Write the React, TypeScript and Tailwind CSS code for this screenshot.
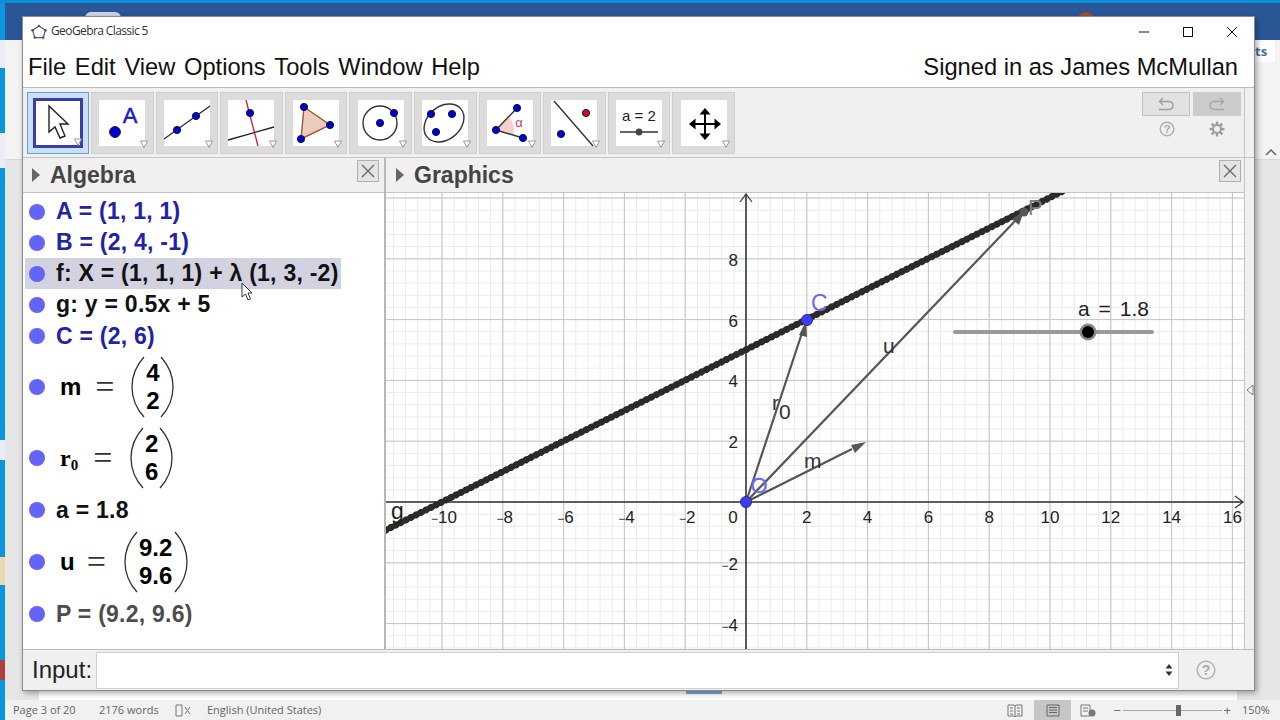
import { ReactNode } from 'react';

const UNIT = 30.4;
const OX = 746;
const OY = 502;
const px = (v: number) => OX + v * UNIT;
const py = (v: number) => OY - v * UNIT;

const range = (a: number, b: number) => Array.from({ length: b - a + 1 }, (_, i) => a + i);

function Pt({ x, y, c = '#0000cc' }: { x: number; y: number; c?: string }) {
  return <circle cx={x} cy={y} r={3.6} fill={c} stroke="#10104a" strokeWidth={1} />;
}

const ICONS: ReactNode[] = [
  <>
    <circle cx={16} cy={32} r={5.4} fill="#0000cc" stroke="#10104a" />
    <text x={31} y={23} textAnchor="middle" fontSize={22} fill="#1a1ad0" stroke="#1a1ad0" strokeWidth={0.5} fontFamily="Liberation Sans">A</text>
  </>,
  <>
    <line x1={0} y1={39} x2={46} y2={6} stroke="#333" strokeWidth={1.5} />
    <Pt x={13} y={30} />
    <Pt x={32} y={16} />
  </>,
  <>
    <line x1={18} y1={0} x2={30} y2={46} stroke="#d02030" strokeWidth={1.3} />
    <line x1={0} y1={40} x2={46} y2={27} stroke="#222" strokeWidth={1.3} />
    <Pt x={22} y={13} />
  </>,
  <>
    <polygon points="11,7 37,25 8,39" fill="#eccdbd" stroke="#9c5a38" strokeWidth={1.4} />
    <Pt x={11} y={7} />
    <Pt x={37} y={25} />
    <Pt x={8} y={39} />
  </>,
  <>
    <circle cx={22} cy={23} r={17} fill="none" stroke="#333" strokeWidth={1.4} />
    <Pt x={22} y={23} />
    <Pt x={36} y={13} />
  </>,
  <>
    <ellipse cx={22} cy={23} rx={22} ry={16.5} transform="rotate(-40 22 23)" fill="none" stroke="#333" strokeWidth={1.4} />
    <Pt x={9} y={14} />
    <Pt x={30} y={14} />
    <Pt x={14} y={32} />
  </>,
  <>
    <path d="M9 30 L21 16 A18 18 0 0 1 26 35 Z" fill="#f7cfcf" />
    <line x1={9} y1={30} x2={30} y2={8} stroke="#333" strokeWidth={1.4} />
    <line x1={9} y1={30} x2={36} y2={38} stroke="#333" strokeWidth={1.4} />
    <Pt x={9} y={30} />
    <Pt x={30} y={8} />
    <Pt x={36} y={38} />
    <text x={32} y={27} textAnchor="middle" fontSize={13} fill="#d04050" fontFamily="Liberation Sans">α</text>
  </>,
  <>
    <line x1={3} y1={1} x2={42} y2={46} stroke="#333" strokeWidth={1.4} />
    <Pt x={35} y={13} c="#cc1111" />
    <Pt x={10} y={34} />
  </>,
  <>
    <text x={23} y={21} textAnchor="middle" fontSize={15} fill="#222" fontFamily="Liberation Sans">a = 2</text>
    <line x1={4} y1={32} x2={42} y2={32} stroke="#333" strokeWidth={1.4} />
    <circle cx={23} cy={32} r={3.4} fill="#444" />
  </>,
  <>
    <line x1={12} y1={24} x2={36} y2={24} stroke="#000" strokeWidth={2} />
    <line x1={24} y1={12} x2={24} y2={36} stroke="#000" strokeWidth={2} />
    <polygon points="24,8 29.5,14.5 18.5,14.5" fill="#000" />
    <polygon points="24,40 29.5,33.5 18.5,33.5" fill="#000" />
    <polygon points="8,24 14.5,18.5 14.5,29.5" fill="#000" />
    <polygon points="40,24 33.5,18.5 33.5,29.5" fill="#000" />
  </>,
];

function Drop({ x = 45, y = 44 }: { x?: number; y?: number }) {
  return <polygon points={`${x - 3.5},${y - 3} ${x + 3.5},${y - 3} ${x},${y + 3.5}`} fill="#fff" stroke="#9a9a9a" strokeWidth={1} />;
}

function ToolButton({ icon }: { icon: ReactNode }) {
  return (
    <div className="w-[62.6px] h-[62px] bg-[#dcdcdc] border border-[#cecece] flex items-center justify-center">
      <div className="w-[46px] h-[46px] bg-white">
        <svg width={46} height={46} className="overflow-visible">
          {icon}
          <Drop />
        </svg>
      </div>
    </div>
  );
}

function CloseBox() {
  return (
    <div className="w-[22px] h-[22px] bg-[#e4e4e4] border border-[#b0b0b0] flex items-center justify-center">
      <svg width={16} height={16}>
        <path d="M2 2 L14 14 M14 2 L2 14" stroke="#666" strokeWidth={1.3} />
      </svg>
    </div>
  );
}

function PanelHeader({ title, pl, pr }: { title: string; pl: string; pr: string }) {
  return (
    <div className={`w-full h-[35px] flex items-center bg-[#f0f0f0] border-b border-[#c4c4c4] ${pl} ${pr}`}>
      <svg width={10} height={16} className="mr-[9px]">
        <polygon points="1,1 9,8 1,15" fill="#666" />
      </svg>
      <span className="text-[23px] font-bold text-[#444444] leading-none">{title}</span>
      <div className="ml-auto self-start mt-[2px]">
        <CloseBox />
      </div>
    </div>
  );
}

function Dot() {
  return <span className="w-[16px] h-[16px] rounded-full bg-[#6464f8] shrink-0 ml-[4px]" />;
}

function Row({ text, color, active, h = 'h-[31px]' }: { text: string; color: string; active?: boolean; h?: string }) {
  return (
    <div className={`${h} flex items-center`}>
      <div className={`flex items-center h-[31px] w-[316px] ${active ? 'bg-[#d2d2e0]' : ''}`}>
        <Dot />
        <span className={`ml-[11px] text-[23px] tracking-[0.25px] font-bold whitespace-pre ${color}`}>{text}</span>
      </div>
    </div>
  );
}

function Paren({ flip }: { flip?: boolean }) {
  return (
    <svg width={14} height={62} className={flip ? '-scale-x-100' : ''}>
      <path d="M13 1 C3 12 1 22 1 31 C1 40 3 50 13 61" fill="none" stroke="#333" strokeWidth={1.3} />
    </svg>
  );
}

function MatrixRow({ label, a, b, eqGap, parenGap, h, colW }: { label: ReactNode; a: string; b: string; eqGap: string; parenGap: string; h: string; colW: string }) {
  return (
    <div className={`${h} flex items-center`}>
      <Dot />
      <span className="ml-[15px] text-[24px] font-bold text-black leading-none">{label}</span>
      <span className={`${eqGap} w-[19px] text-center text-[34px] text-[#333] leading-none font-['Liberation_Serif',serif]`}>=</span>
      <div className={`${parenGap} flex items-center`}>
        <Paren />
        <div className={`${colW} flex flex-col items-center text-[24px] font-bold text-black leading-[28px]`}>
          <span>{a}</span>
          <span>{b}</span>
        </div>
        <Paren flip />
      </div>
    </div>
  );
}

function Num({ v }: { v: number }) {
  return v < 0 ? <><tspan fontSize={12}>−</tspan>{-v}</> : <>{v}</>;
}

function Graph() {
  const minorStep = (UNIT * 2) / 5;
  const xMajor = range(-12, 16);
  const yMajor = range(-5, 10);
  const xMinor = range(-30, 42);
  const yMinor = range(-12, 25);
  const yLabels = [8, 6, 4, 2, -2, -4];
  const xLabels = [-10, -8, -6, -4, -2, 2, 4, 6, 8, 10, 12, 14, 16];
  return (
    <svg width={858} height={456} viewBox="386 193 858 456" className="block bg-white" fontFamily="Liberation Sans">
      {xMinor.map(i => <line key={`a${i}`} x1={OX + i * minorStep} x2={OX + i * minorStep} y1={193} y2={649} stroke="#ececec" />)}
      {yMinor.map(i => <line key={`b${i}`} y1={OY - i * minorStep} y2={OY - i * minorStep} x1={386} x2={1244} stroke="#ececec" />)}
      {xMajor.map(i => i % 2 === 0 && <line key={`c${i}`} x1={px(i)} x2={px(i)} y1={193} y2={649} stroke="#c4c4c4" />)}
      {yMajor.map(i => i % 2 === 0 && <line key={`d${i}`} y1={py(i)} y2={py(i)} x1={386} x2={1244} stroke="#c4c4c4" />)}

      <line x1={386} y1={502} x2={1243} y2={502} stroke="#333" strokeWidth={1.4} />
      <line x1={746} y1={649} x2={746} y2={194} stroke="#222" strokeWidth={1.4} />
      <path d="M1235 496 L1243 502 L1235 508 M740 202 L746 194 L752 202" fill="none" stroke="#333" strokeWidth={1.2} />

      {xLabels.map(v => (
        <text key={v} x={px(v) + (v < 0 ? 2 : 0)} y={523} textAnchor="middle" fontSize={17} fill="#222">
          <Num v={v} />
        </text>
      ))}
      <text x={733} y={523} textAnchor="middle" fontSize={17} fill="#222">0</text>
      {yLabels.map(v => (
        <text key={v} x={738} y={py(v) + 7} textAnchor="end" fontSize={17} fill="#222">
          <Num v={v} />
        </text>
      ))}

      {/* line g */}
      <line x1={386} y1={530} x2={1065} y2={190} stroke="#333" strokeWidth={5} />
      <line x1={386} y1={530} x2={1065} y2={190} stroke="#2a2a2a" strokeWidth={7} strokeLinecap="round" strokeDasharray="0.1 5.5" />

      {/* vectors */}
      <g stroke="#555" strokeWidth={2.2}>
        <line x1={OX} y1={OY} x2={852} y2={449} />
        <line x1={OX} y1={OY} x2={1016} y2={220} />
        <line x1={OX} y1={OY} x2={802} y2={333} />
      </g>
      <polygon points="866,442 851,445 855,453" fill="#555" />
      <polygon points="1024,211 1012,219 1019,225" fill="#555" />
      <polygon points="806,321 799,335 807,337" fill="#555" />

      <circle cx={1024} cy={212} r={4.5} fill="#555" />
      <circle cx={OX} cy={OY} r={5.5} fill="#3c3cf0" stroke="#2a2a90" />
      <circle cx={807} cy={320} r={5.5} fill="#3c3cf0" stroke="#2a2a90" />

      <text x={811} y={311} fontSize={23} fill="#6a6af0">C</text>
      <text x={759} y={493} textAnchor="middle" fontSize={22} fill="#6a6af0" stroke="#6a6af0" strokeWidth={0.3}>O</text>
      <text x={1028} y={215} fontSize={22} fill="#808080">P</text>
      <text x={883} y={353} fontSize={21} fill="#333">u</text>
      <text x={804} y={468} fontSize={21} fill="#333">m</text>
      <text x={772} y={410} fontSize={21} fill="#333">r</text>
      <text x={779} y={419} fontSize={21} fill="#333">0</text>
      <text x={391} y={519} fontSize={23} fill="#222">g</text>

      <text x={1113.5} y={316} textAnchor="middle" fontSize={21} wordSpacing={3} fill="#222">a = 1.8</text>
      <line x1={955} y1={332} x2={1152} y2={332} stroke="#9a9a9a" strokeWidth={4} strokeLinecap="round" />
      <circle cx={1088} cy={332} r={8.5} fill="#888" />
      <circle cx={1088} cy={332} r={6} fill="#000" />
    </svg>
  );
}

const UNDO_PATH = 'M4 4.5 H12 C15 4.5 17 6 17 8.5 C17 11 15 12.5 12 12.5 H3 M7 1 L3.5 4.5 L7 8';

function GeoGebraWindow() {
  return (
    <div className="absolute left-[22px] top-[16px] w-[1233px] h-[675px] bg-[#f0f0f0] border border-[#8a8a8a] shadow-[2px_2px_6px_rgba(0,0,0,0.35)] flex flex-col font-['Liberation_Sans',sans-serif]">
      {/* title bar */}
      <div className="h-[29px] bg-white flex items-center pl-[8px] shrink-0">
        <svg width={16} height={16} viewBox="0 0 16 16">
          <polygon points="8,2 14.5,6.3 12.2,13.6 3.8,13.6 1.5,6.3" fill="none" stroke="#555577" strokeWidth={1.2} />
          <g fill="#5050a0">
            <circle cx={8} cy={2} r={1.3} />
            <circle cx={14.5} cy={6.3} r={1.3} />
            <circle cx={12.2} cy={13.6} r={1.3} />
            <circle cx={3.8} cy={13.6} r={1.3} />
            <circle cx={1.5} cy={6.3} r={1.3} />
          </g>
        </svg>
        <span className="ml-[4px] -mt-[2px] text-[12px] text-[#333] font-['Open_Sans',sans-serif] tracking-[-0.6px]">GeoGebra Classic 5</span>
        <div className="ml-auto flex items-center -mr-[2px]">
          <svg width={46} height={20}>
            <line x1={19} y1={10} x2={29} y2={10} stroke="#111" />
          </svg>
          <svg width={44} height={20}>
            <rect x={17.5} y={5.5} width={9} height={9} fill="none" stroke="#111" />
          </svg>
          <svg width={46} height={20}>
            <path d="M17 5 L27 15 M27 5 L17 15" stroke="#111" />
          </svg>
        </div>
      </div>

      {/* menu */}
      <div className="h-[42px] bg-white flex items-center pl-[5px] pr-[16px] pt-[2px] border-b border-[#bdbdbd] shrink-0 text-[23.7px] text-[#111] leading-none">
        <div className="flex gap-[8.7px]">
          {['File', 'Edit', 'View', 'Options', 'Tools', 'Window', 'Help'].map(m => <span key={m}>{m}</span>)}
        </div>
        <span className="ml-auto">Signed in as James McMullan</span>
      </div>

      {/* toolbar */}
      <div className="h-[70px] flex shrink-0 border-b border-[#c4c4c4]">
        <div className="flex-1 flex items-start pt-[4px] pl-[4px] pr-[3px] border-r border-[#c4c4c4] mr-[9px]">
          <div className="flex gap-[2px]">
            <div className="w-[62px] h-[62px] bg-[#c9e0f7] border border-[#6d9cc8] flex items-center justify-center">
              <div className="w-[50px] h-[50px] bg-white border-[3px] border-[#3a3fa5]">
                <svg width={44} height={44} className="overflow-visible">
                  <path d="M13 5 L13 31 L19 26 L24 37 L29 35 L24 23 L32 23 Z" fill="#fff" stroke="#222" strokeWidth={1.4} />
                  <Drop x={42} y={41} />
                </svg>
              </div>
            </div>
            {ICONS.map((icon, i) => <ToolButton key={i} icon={icon} />)}
          </div>
          <div className="ml-auto flex flex-col gap-[3px] items-center">
            <div className="flex gap-[3px]">
              <div className="w-[48px] h-[24px] bg-[#e2e2e2] border border-[#c2c2c2] flex items-center justify-center">
                <svg width={20} height={14}>
                  <path d={UNDO_PATH} fill="none" stroke="#a0a0a0" strokeWidth={1.5} />
                </svg>
              </div>
              <div className="w-[48px] h-[24px] bg-[#cccccc] flex items-center justify-center">
                <svg width={20} height={14} className="-scale-x-100">
                  <path d={UNDO_PATH} fill="none" stroke="#a8a8a8" strokeWidth={1.5} />
                </svg>
              </div>
            </div>
            <div className="flex gap-[34px] mt-[2px]">
              <svg width={16} height={16}>
                <circle cx={8} cy={8} r={6.8} fill="none" stroke="#b0b0b0" strokeWidth={1.4} />
                <text x={8} y={12} textAnchor="middle" fontSize={11} fontWeight="bold" fill="#a8a8a8">?</text>
              </svg>
              <svg width={16} height={16} viewBox="0 0 16 16">
                <g stroke="#9c9c9c" strokeWidth={2.4}>
                  <line x1={8} y1={0.5} x2={8} y2={15.5} />
                  <line x1={0.5} y1={8} x2={15.5} y2={8} />
                  <line x1={2.7} y1={2.7} x2={13.3} y2={13.3} />
                  <line x1={13.3} y1={2.7} x2={2.7} y2={13.3} />
                </g>
                <circle cx={8} cy={8} r={4} fill="#f0f0f0" stroke="#9c9c9c" strokeWidth={2} />
              </svg>
            </div>
          </div>
        </div>
      </div>

      {/* panels */}
      <div className="flex h-[491px] shrink-0">
        <div className="w-[363px] border-r-[2px] border-[#b8b8b8] flex flex-col relative bg-white">
          <PanelHeader title="Algebra" pl="pl-[8px]" pr="pr-[5px]" />
          <div className="pt-[3px] pl-[2px]">
            <Row text="A = (1, 1, 1)" color="text-[#2323a6]" />
            <Row text="B = (2, 4, -1)" color="text-[#2323a6]" />
            <Row text="f: X = (1, 1, 1) + λ (1, 3, -2)" color="text-[#111]" active />
            <Row text="g: y = 0.5x + 5" color="text-[#111]" />
            <Row text="C = (2, 6)" color="text-[#2323a6]" h="h-[32px]" />
            <MatrixRow label="m" a="4" b="2" eqGap="ml-[14px]" parenGap="ml-[17px]" h="h-[70px]" colW="w-[15px]" />
            <MatrixRow
              label={<span className="font-['Liberation_Serif',serif]">r<sub className="text-[15px]">0</sub></span>}
              a="2" b="6" eqGap="ml-[15px]" parenGap="ml-[18px]" h="h-[72px]" colW="w-[15px]" />
            <Row text="a = 1.8" color="text-[#111]" h="h-[32px]" />
            <MatrixRow label="u" a="9.2" b="9.6" eqGap="ml-[12px]" parenGap="ml-[18px]" h="h-[71px]" colW="w-[36px]" />
            <Row text="P = (9.2, 9.6)" color="text-[#4d4d4d]" h="h-[34px]" />
          </div>
          <svg width={14} height={20} className="absolute left-[218px] top-[124px]">
            <path d="M1 1 L1 15 L4.5 12 L7 18 L9.5 17 L7 11 L11 11 Z" fill="#fff" stroke="#333" />
          </svg>
        </div>
        <div className="w-[858px] flex flex-col">
          <PanelHeader title="Graphics" pl="pl-[9px]" pr="pr-[3px]" />
          <Graph />
        </div>
        <div className="flex-1 flex items-center justify-center border-l border-[#c4c4c4] pb-[28px]">
          <svg width={8} height={12}>
            <polygon points="7,1 1,6 7,11" fill="#fff" stroke="#777" />
          </svg>
        </div>
      </div>

      {/* input */}
      <div className="flex-1 flex items-center border-t border-[#bdbdbd] pl-[9px]">
        <span className="text-[24px] text-[#222] w-[64px]">Input:</span>
        <div className="w-[1083px] h-[37px] bg-white border border-[#d0d0d0] flex items-center justify-end pr-[5px]">
          <svg width={8} height={14}>
            <polygon points="4,1 7.5,5.5 0.5,5.5" fill="#333" />
            <polygon points="4,13 7.5,8.5 0.5,8.5" fill="#333" />
          </svg>
        </div>
        <svg width={20} height={20} className="ml-[17px]">
          <circle cx={10} cy={10} r={8.8} fill="none" stroke="#b4b4b4" strokeWidth={1.6} />
          <text x={10} y={15} textAnchor="middle" fontSize={14} fontWeight="bold" fill="#a8a8a8">?</text>
        </svg>
      </div>
    </div>
  );
}

function StatusBar() {
  return (
    <div className="h-[20px] bg-[#f1f1f1] flex items-center text-[11px] text-[#666] font-['Open_Sans',sans-serif] shrink-0 pl-[8px]">
      <span className="w-[86px]">Page 3 of 20</span>
      <span className="w-[76px]">2176 words</span>
      <svg width={16} height={13} className="mr-[16px]">
        <path d="M1 1 H7 V12 H1 Z" fill="none" stroke="#777" />
        <path d="M10 3 L15 10 M15 3 L10 10" stroke="#777" />
      </svg>
      <span>English (United States)</span>
      <div className="ml-auto flex items-center h-full">
        <svg width={16} height={13}>
          <path d="M1 1 H7 L8 2 L9 1 H15 V12 H9 L8 13 L7 12 H1 Z M8 2 V12 M3 4 H6 M3 7 H6 M3 10 H6 M10 4 H13 M10 7 H13 M10 10 H13" fill="none" stroke="#777" />
        </svg>
        <div className="ml-[11px] w-[37px] h-full bg-[#c6c6c6] flex items-center justify-center">
          <svg width={14} height={13}>
            <path d="M1 1 H13 V12 H1 Z M3 3.5 H11 M3 6 H11 M3 8.5 H11" fill="none" stroke="#666" />
          </svg>
        </div>
        <svg width={16} height={13} className="ml-[9px]">
          <path d="M1 1 H10 V12 H1 Z M3 4 H8 M3 7 H8" fill="none" stroke="#777" />
          <circle cx={12} cy={9} r={3.5} fill="#777" />
        </svg>
        <span className="ml-[17px] text-[13px] leading-none">−</span>
        <div className="relative w-[99px] h-[1px] bg-[#aaa] ml-[2px]">
          <div className="absolute left-[53px] -top-[5px] w-[5px] h-[11px] bg-[#666]" />
        </div>
        <span className="ml-[2px] text-[13px] leading-none">+</span>
        <span className="ml-[11px] w-[38px]">150%</span>
      </div>
    </div>
  );
}

export default function App() {
  return (
    <div className="relative w-[1280px] h-[720px] overflow-hidden flex flex-col bg-[#e6e6e6]">
      <div className="h-[3px] bg-[#0a8ed8] shrink-0" />
      <div className="flex-1 flex min-h-0">
        <div className="w-[5px] bg-[#0a96dc] shrink-0 flex flex-col">
          <div className="h-[37px]" />
          <div className="h-[28px] bg-[#e8eef4]" />
          <div className="h-[65px]" />
          <div className="h-[35px] bg-[#e8eef4]" />
          <div className="h-[272px]" />
          <div className="h-[20px] bg-[#e8eef4]" />
          <div className="h-[97px]" />
          <div className="h-[28px] bg-[#e8d8b0]" />
          <div className="h-[75px]" />
          <div className="h-[20px] bg-[#b04040]" />
        </div>
        <div className="flex-1 flex flex-col min-w-0">
          <div className="h-[37px] bg-[#2b5797] shrink-0 flex pt-[9px] pl-[80px] pr-[185px]">
            <div className="w-[36px] h-[16px] bg-[#cfd8e6] rounded-t-[6px]" />
            <div className="ml-auto w-[18px] h-[18px] rounded-full bg-[#a0522d]" />
          </div>
          <div className="h-[120px] bg-[#f3f3f3] border-b border-[#d8d8d8] shrink-0 flex justify-end items-start">
            <div className="flex flex-col items-end h-full mr-[5px]">
              <div className="h-[22px] w-[20px] bg-white text-[13px] font-bold text-[#4a6aa0] font-['Open_Sans',sans-serif] leading-[22px]">ts</div>
              <svg width={12} height={8} className="mt-[87px] -mr-[2px]">
                <path d="M1 6 L6 1 L11 6" fill="none" stroke="#666" strokeWidth={1.5} />
              </svg>
            </div>
          </div>
          <div className="flex-1 flex">
            <div className="ml-[34px] mr-[43px] flex-1 bg-white flex items-end justify-center pb-[6px]">
              <div className="w-[36px] h-[4px] bg-[#7fa8d8] ml-[132px]" />
            </div>
          </div>
          <StatusBar />
        </div>
      </div>
      <GeoGebraWindow />
    </div>
  );
}
